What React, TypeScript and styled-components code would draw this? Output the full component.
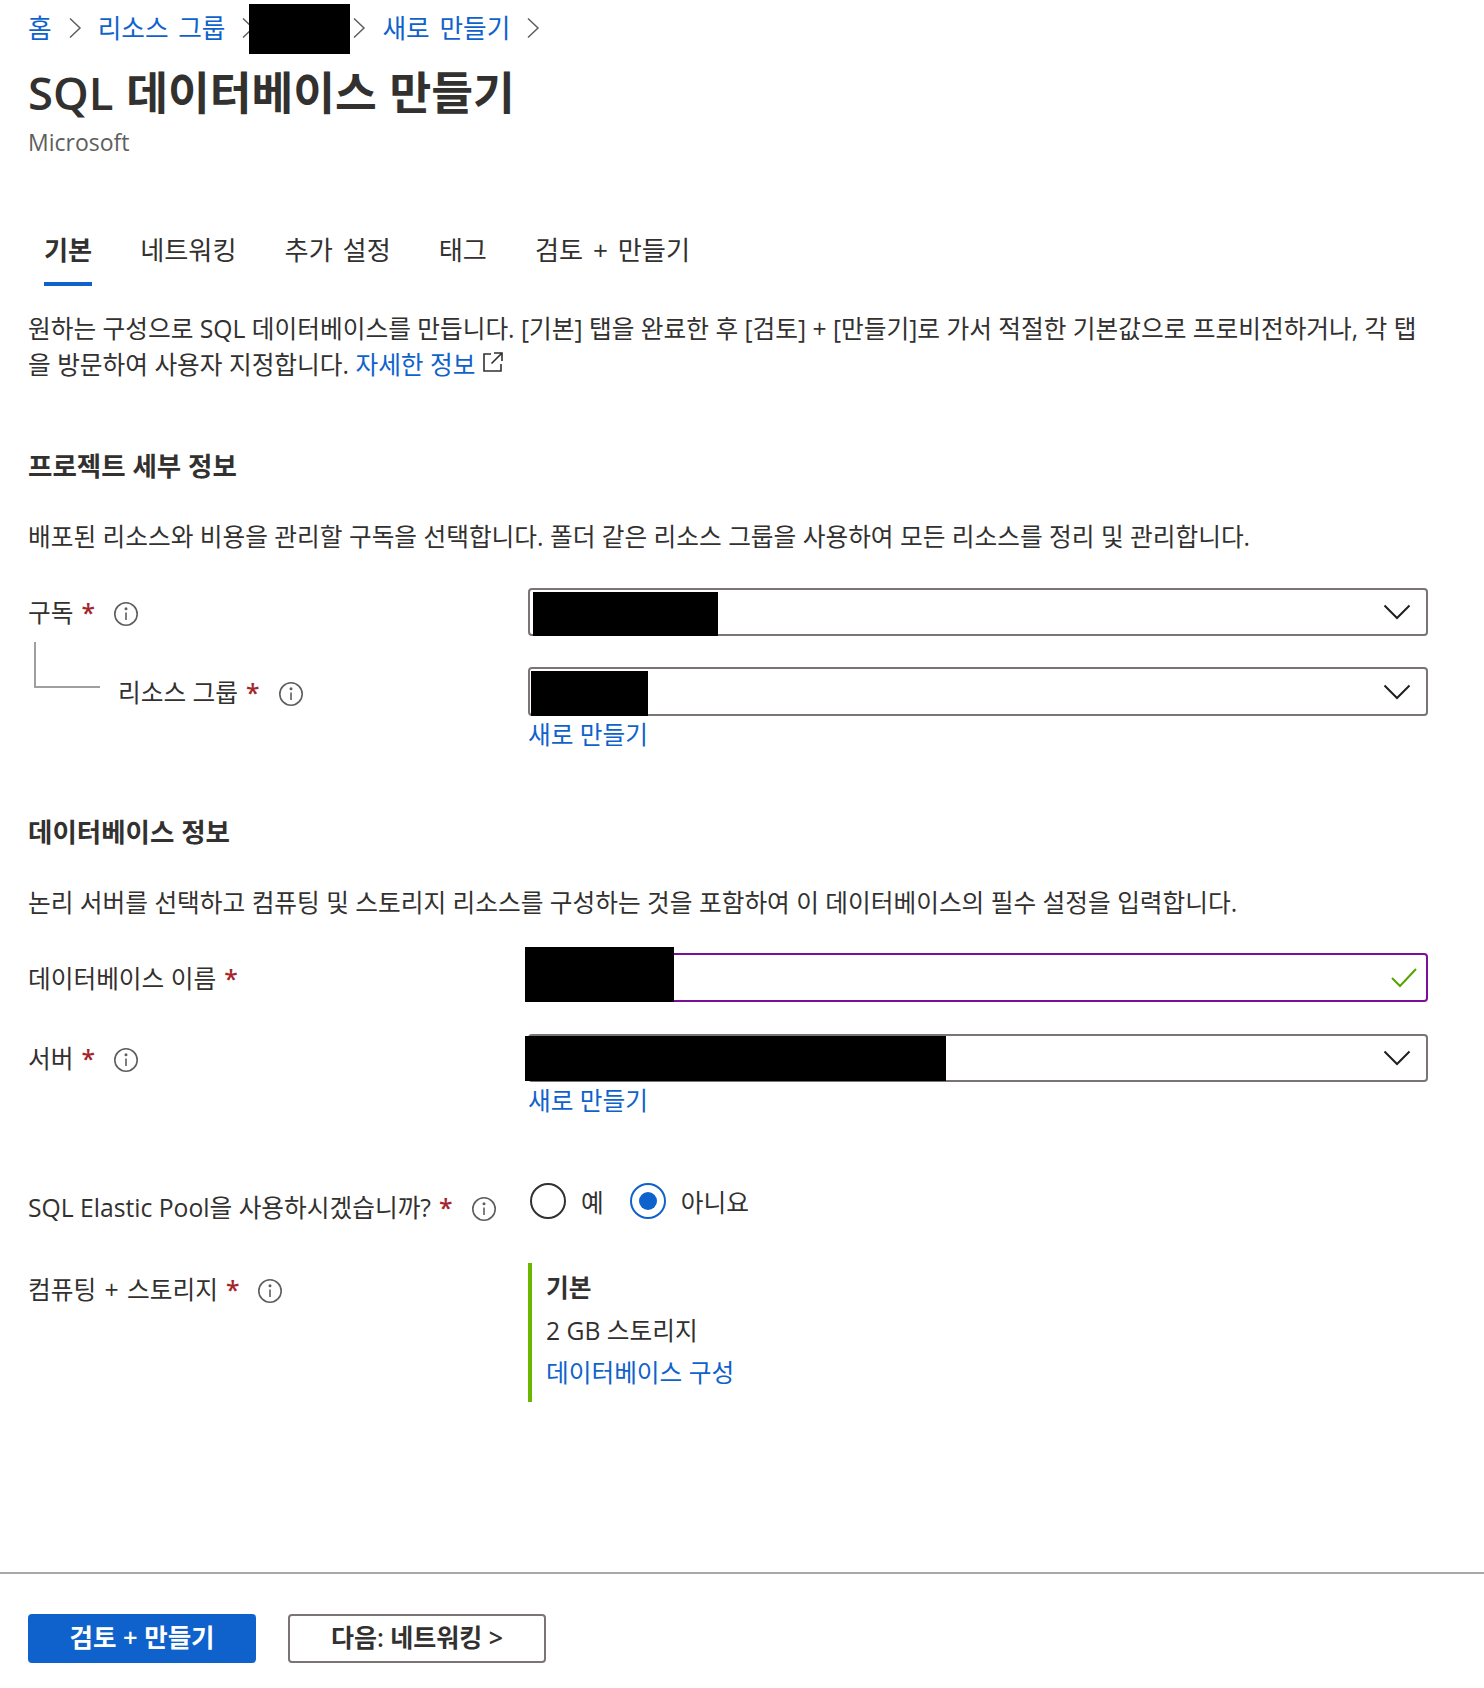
import React from 'react';
import styled, { createGlobalStyle } from 'styled-components';

const GlobalStyle = createGlobalStyle`
  html, body {
    margin: 0;
    background: #fff;
    color: #323130;
    font-family: "Open Sans", "Noto Sans CJK KR", sans-serif;
    font-size: 24.7px;
  }
  * { box-sizing: border-box; }
`;

function Chevron() {
  return (
    <DropIcon width="28" height="16" viewBox="0 0 28 16" fill="none" stroke="#201f1e" strokeWidth="2">
      <path d="M1.5 1.5 14 14 26.5 1.5" />
    </DropIcon>
  );
}

function Info() {
  return (
    <InfoIcon width="26" height="26" viewBox="0 0 26 26" fill="none" stroke="#605e5c" strokeWidth="1.6">
      <circle cx="13" cy="13" r="11.2" />
      <path d="M13 11.5v7.5" />
      <circle cx="13" cy="7.8" r="0.7" fill="#605e5c" />
    </InfoIcon>
  );
}

function Sep() {
  return (
    <SepIcon width="14" height="22" viewBox="0 0 14 22" fill="none" stroke="#605e5c" strokeWidth="1.5">
      <path d="M2 1.5 12 11 2 20.5" />
    </SepIcon>
  );
}

function Label({ text, info = true, wide }: { text: string; info?: boolean; wide?: boolean }) {
  return (
    <LabelBox $wide={wide}>
      {text}
      <Star>*</Star>
      {info && <Info />}
    </LabelBox>
  );
}

export default function App() {
  return (
    <>
      <GlobalStyle />
      <Main>
        <Breadcrumb>
          <Crumb>홈</Crumb>
          <Sep />
          <Crumb>리소스 그룹</Crumb>
          <Sep />
          <CrumbMask />
          <Sep />
          <Crumb>새로 만들기</Crumb>
          <Sep />
        </Breadcrumb>
        <Title>SQL 데이터베이스 만들기</Title>
        <Publisher>Microsoft</Publisher>

        <Tabs>
          <Tab $active>기본</Tab>
          <Tab>네트워킹</Tab>
          <Tab>추가 설정</Tab>
          <Tab>태그</Tab>
          <Tab>검토 + 만들기</Tab>
        </Tabs>

        <Intro>
          원하는 구성으로 SQL 데이터베이스를 만듭니다. [기본] 탭을 완료한 후 [검토] + [만들기]로 가서 적절한 기본값으로 프로비전하거나, 각 탭을 방문하여 사용자 지정합니다.{' '}
          <Link>자세한 정보</Link>
          <ExternalIcon width="22" height="22" viewBox="0 0 22 22" fill="none" stroke="#323130" strokeWidth="1.6">
            <path d="M9 3H2v17h17v-7M12 2h8v8M20 2 9.5 12.5" />
          </ExternalIcon>
        </Intro>

        <SectionTitle>프로젝트 세부 정보</SectionTitle>
        <SectionText>배포된 리소스와 비용을 관리할 구독을 선택합니다. 폴더 같은 리소스 그룹을 사용하여 모든 리소스를 정리 및 관리합니다.</SectionText>

        <FormRow $gap={33}>
          <Label text="구독" />
          <Field>
            <Mask $left={3} $top={2} $width={185} $height={44} />
            <Chevron />
          </Field>
        </FormRow>
        <FormRow $gap={31}>
          <Nested>
            <Connector />
            <Label text="리소스 그룹" />
          </Nested>
          <Field $tall>
            <Mask $left={1} $top={2} $width={117} $height={45} />
            <Chevron />
          </Field>
        </FormRow>
        <FieldLink>새로 만들기</FieldLink>

        <SectionTitle $gap={58}>데이터베이스 정보</SectionTitle>
        <SectionText>논리 서버를 선택하고 컴퓨팅 및 스토리지 리소스를 구성하는 것을 포함하여 이 데이터베이스의 필수 설정을 입력합니다.</SectionText>

        <FormRow $gap={32}>
          <Label text="데이터베이스 이름" info={false} />
          <Field $tall $valid>
            <Mask $left={-5} $top={-8} $width={149} $height={55} />
            <CheckIcon width="28" height="22" viewBox="0 0 28 22" fill="none" stroke="#57a300" strokeWidth="2">
              <path d="M2 11l8 8L26 2" />
            </CheckIcon>
          </Field>
        </FormRow>
        <FormRow $gap={32}>
          <Label text="서버" />
          <Field>
            <Mask $left={-5} $top={0} $width={421} $height={45} />
            <Chevron />
          </Field>
        </FormRow>
        <FieldLink>새로 만들기</FieldLink>

        <RadioRow>
          <RadioLabel>
            <Label text="SQL Elastic Pool을 사용하시겠습니까?" />
          </RadioLabel>
          <RadioGroup>
            <Radio />
            <RadioText>예</RadioText>
            <Radio $checked />
            <RadioText>아니요</RadioText>
          </RadioGroup>
        </RadioRow>

        <SummaryRow>
          <SummaryLabel>
            <Label text="컴퓨팅 + 스토리지" wide />
          </SummaryLabel>
          <Summary>
            <SummaryName>기본</SummaryName>
            <SummaryLine>2 GB 스토리지</SummaryLine>
            <Link>데이터베이스 구성</Link>
          </Summary>
        </SummaryRow>
      </Main>

      <Footer>
        <PrimaryButton>검토 + 만들기</PrimaryButton>
        <SecondaryButton>다음: 네트워킹 &gt;</SecondaryButton>
      </Footer>
    </>
  );
}

const Main = styled.main`
  padding-left: 28px;
  height: 1572px;
`;

const Breadcrumb = styled.nav`
  height: 56px;
  display: flex;
  align-items: center;
  font-size: 25.7px;
  word-spacing: 3px;
`;

const Crumb = styled.a`
  color: #0f62cc;
  margin-top: -2px;
`;

const SepIcon = styled.svg`
  margin: 0 16px;
  flex: none;
`;

const CrumbMask = styled.div`
  width: 101px;
  height: 50px;
  margin: 2px -14px 0 -22px;
  background: #000;
  flex: none;
`;

const Title = styled.h1`
  margin: 8px 0 0;
  font-size: 45.4px;
  word-spacing: 1px;
  line-height: 56px;
  font-weight: 600;
  color: #323130;
`;

const Publisher = styled.div`
  margin-top: 6px;
  font-size: 23px;
  line-height: 32px;
  color: #605e5c;
`;

const Tabs = styled.div`
  display: flex;
  margin: 64px 0 0 -8px;
`;

const Tab = styled.div<{ $active?: boolean }>`
  margin: 0 24px;
  height: 64px;
  line-height: 56px;
  font-size: 26.2px;
  word-spacing: 3px;
  font-weight: ${p => (p.$active ? 600 : 400)};
  border-bottom: 4px solid ${p => (p.$active ? '#0f62cc' : 'transparent')};
  white-space: nowrap;
`;

const Intro = styled.p`
  margin: 25px 0 0;
  width: 1400px;
  line-height: 36px;
`;

const Link = styled.a`
  color: #0f62cc;
`;

const ExternalIcon = styled.svg`
  margin-left: 7px;
  vertical-align: 1px;
`;

const SectionTitle = styled.h2<{ $gap?: number }>`
  margin: ${p => p.$gap ?? 63}px 0 0;
  font-size: 26.5px;
  line-height: 40px;
  font-weight: 600;
`;

const SectionText = styled.p`
  margin: 33px 0 0;
  line-height: 36px;
`;

const FormRow = styled.div<{ $gap: number }>`
  display: grid;
  grid-template-columns: 500px 900px;
  align-items: center;
  margin-top: ${p => p.$gap}px;
`;

const LabelBox = styled.div<{ $wide?: boolean }>`
  display: flex;
  align-items: center;
  padding-top: 2px;
  line-height: 36px;
  white-space: nowrap;
  word-spacing: ${p => (p.$wide ? 2 : 0)}px;
`;

const Star = styled.span`
  color: #a4262c;
  font-weight: 600;
  margin-left: 8px;
  line-height: 24px;
  height: 24px;
`;

const InfoIcon = styled.svg`
  margin: 2px 0 0 18px;
  flex: none;
`;

const Nested = styled.div`
  position: relative;
  padding-left: 90px;
`;

const Connector = styled.div`
  position: absolute;
  left: 6px;
  top: -31px;
  width: 66px;
  height: 46px;
  border-left: 2px solid #a19f9d;
  border-bottom: 2px solid #a19f9d;
`;

const Field = styled.div<{ $tall?: boolean; $valid?: boolean }>`
  position: relative;
  height: ${p => (p.$tall ? 49 : 48)}px;
  border: 2px solid ${p => (p.$valid ? '#7a0f99' : '#7a7574')};
  border-radius: 4px;
  display: flex;
  align-items: center;
  justify-content: flex-end;
`;

const Mask = styled.div<{ $left: number; $top: number; $width: number; $height: number }>`
  position: absolute;
  left: ${p => p.$left}px;
  top: ${p => p.$top}px;
  width: ${p => p.$width}px;
  height: ${p => p.$height}px;
  background: #000;
`;

const DropIcon = styled.svg`
  margin-right: 15px;
`;

const CheckIcon = styled.svg`
  margin-right: 8px;
`;

const FieldLink = styled.a`
  display: block;
  margin-left: 500px;
  line-height: 38px;
  color: #0f62cc;
`;

const RadioRow = styled.div`
  display: grid;
  grid-template-columns: 500px 1fr;
  margin-top: 56px;
  height: 36px;
`;

const RadioLabel = styled.div`
  margin-top: 12px;
`;

const RadioGroup = styled.div`
  display: flex;
  align-items: center;
  padding-left: 2px;
`;

const Radio = styled.span<{ $checked?: boolean }>`
  width: 36px;
  height: 36px;
  border-radius: 50%;
  border: 2px solid ${p => (p.$checked ? '#0f62cc' : '#323130')};
  display: flex;
  align-items: center;
  justify-content: center;
  flex: none;
  &::after {
    content: '';
    display: ${p => (p.$checked ? 'block' : 'none')};
    width: 18px;
    height: 18px;
    border-radius: 50%;
    background: #0f62cc;
  }
`;

const RadioText = styled.span`
  margin: 0 26px 0 15px;
`;

const SummaryRow = styled.div`
  display: grid;
  grid-template-columns: 500px 1fr;
  margin-top: 51px;
`;

const SummaryLabel = styled.div`
  margin-top: 7px;
`;

const Summary = styled.div`
  height: 139px;
  border-left: 4px solid #6bb700;
  padding: 7px 0 0 14px;
  display: flex;
  flex-direction: column;
  gap: 6.5px;
  line-height: 36px;
`;

const SummaryName = styled.div`
  font-weight: 600;
`;

const SummaryLine = styled.div``;

const Footer = styled.footer`
  height: 116px;
  border-top: 2px solid #a8a8a8;
  padding: 40px 0 0 28px;
  display: flex;
  gap: 32px;
  align-items: flex-start;
`;

const PrimaryButton = styled.button`
  width: 228px;
  height: 49px;
  border: none;
  border-radius: 4px;
  background: #0f62cc;
  color: #fff;
  font: 600 25.5px "Open Sans", "Noto Sans CJK KR", sans-serif;
  padding: 0 0 6px;
`;

const SecondaryButton = styled.button`
  width: 258px;
  height: 49px;
  border: 2px solid #7a7574;
  border-radius: 4px;
  background: #fff;
  color: #323130;
  font: 600 25px "Open Sans", "Noto Sans CJK KR", sans-serif;
  padding: 0 0 6px;
`;
